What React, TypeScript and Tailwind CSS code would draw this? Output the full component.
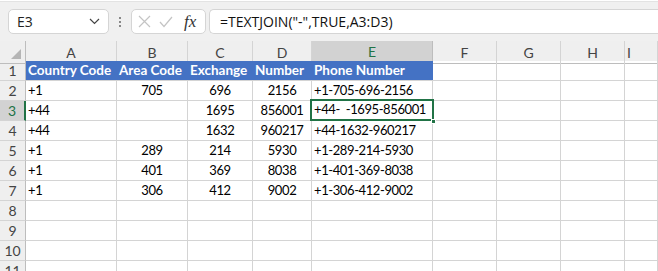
import React from "react";

const cols = ["A", "B", "C", "D", "E", "F", "G", "H", "I"];

const header = ["Country Code", "Area Code", "Exchange", "Number", "Phone Number"];

const data = [
  ["+1", "705", "696", "2156", "+1-705-696-2156"],
  ["+44", "", "1695", "856001", "+44-  -1695-856001"],
  ["+44", "", "1632", "960217", "+44-1632-960217"],
  ["+1", "289", "214", "5930", "+1-289-214-5930"],
  ["+1", "401", "369", "8038", "+1-401-369-8038"],
  ["+1", "306", "412", "9002", "+1-306-412-9002"],
];

const grid = "grid grid-cols-[26px_91px_71px_65px_59px_121px_64px_64px_64px_1fr]";
const cell = "border-b border-r border-[#d4d4d4] flex items-center whitespace-nowrap overflow-hidden";

function RowHead({ n, active }: { n: number; active?: boolean }) {
  return (
    <div
      className={
        "h-5 flex items-center justify-center border-b border-[#d4d4d4] text-[14px] tracking-normal " +
        (active
          ? "bg-[#d2d2d2] text-[#217346] border-r-2 border-r-[#217346]"
          : "bg-[#efefef] text-[#444] border-r border-r-[#bdbdbd]")
      }
    >
      {n}
    </div>
  );
}

export default function App() {
  return (
    <div className="w-[658px] h-[271px] overflow-hidden bg-white font-['Lato','Liberation_Sans',sans-serif] text-[13px] tracking-[-0.4px] text-black">
      {/* formula bar */}
      <div className="h-[2px] bg-white border-b border-[#e3e3e3]" />
      <div className="h-[39px] bg-[#f0f0f0] flex items-start pt-[7px] pl-2 tracking-normal font-['Open_Sans','Liberation_Sans',sans-serif]">
        <div className="w-[101px] h-[25px] bg-white border border-[#d5d5d5] rounded-[5px] flex items-center justify-between pl-2 pr-2 text-[14px] text-[#222]">
          <span>E3</span>
          <svg width="11" height="7" viewBox="0 0 11 7">
            <path d="M1 1l4.5 4.5L10 1" fill="none" stroke="#444" strokeWidth="1.2" />
          </svg>
        </div>
        <div className="w-[22px] h-[25px] flex flex-col items-center justify-center gap-[2px]">
          <span className="w-[2px] h-[2px] bg-[#888]" />
          <span className="w-[2px] h-[2px] bg-[#888]" />
          <span className="w-[2px] h-[2px] bg-[#888]" />
        </div>
        <div className="w-[75px] h-[25px] bg-white border border-[#d5d5d5] rounded-[5px] flex items-center pl-[6px] gap-[8px]">
          <svg width="13" height="13" viewBox="0 0 13 13">
            <path d="M1 1l11 11M12 1L1 12" stroke="#c4c4c4" strokeWidth="1.2" fill="none" />
          </svg>
          <svg width="14" height="12" viewBox="0 0 14 12">
            <path d="M1 6l4 4.5L13 1" stroke="#c4c4c4" strokeWidth="1.2" fill="none" />
          </svg>
          <span className="font-['Liberation_Serif',serif] italic text-[17px] text-[#333] ml-[3px] leading-none">fx</span>
        </div>
        <div className="ml-[3px] flex-1 h-[25px] bg-white border border-[#d5d5d5] border-r-0 rounded-l-[5px] flex items-center pl-[10px] text-[14px] text-[#111]">
          =TEXTJOIN("-",TRUE,A3:D3)
        </div>
      </div>

      {/* column headers */}
      <div className={grid + " h-5 bg-[#efefef] text-[14px] text-[#444] tracking-normal"}>
        <div className="border-b border-[#bdbdbd] border-r border-r-[#bdbdbd] relative">
          <svg className="absolute right-[4px] bottom-[4px]" width="10" height="10" viewBox="0 0 10 10">
            <path d="M10 0V10H0Z" fill="#b5b5b5" />
          </svg>
        </div>
        {cols.map((c) =>
          c === "E" ? (
            <div key={c} className="bg-[#d2d2d2] text-[#217346] border-b-2 border-[#217346] border-r border-r-[#bdbdbd] flex items-center justify-center">
              {c}
            </div>
          ) : (
            <div key={c} className="border-b border-[#bdbdbd] border-r border-r-[#d4d4d4] flex items-center justify-center">
              <span className={c === "I" ? "w-full pl-[2px]" : ""}>{c}</span>
            </div>
          )
        )}
      </div>

      {/* row 1 */}
      <div className={grid + " h-5"}>
        <RowHead n={1} />
        {header.map((h) => (
          <div key={h} className="bg-[#4472c4] border-b border-[#d4d4d4] text-white font-bold text-[13.5px] tracking-normal flex items-center pl-[2px] whitespace-nowrap overflow-hidden">
            {h}
          </div>
        ))}
        {[0, 1, 2, 3].map((i) => (
          <div key={i} className="border-b border-r border-[#d4d4d4]" />
        ))}
      </div>

      {data.map((r, ri) => {
        const rowNum = ri + 2;
        const active = rowNum === 3;
        return (
          <div key={ri} className={grid + " h-5"}>
            <RowHead n={rowNum} active={active} />
            <div className={cell + " pl-[2px]"}>{r[0]}</div>
            <div className={cell + " justify-center"}>{r[1]}</div>
            <div className={cell + " justify-center"}>{r[2]}</div>
            <div className={cell + " justify-center"}>{r[3]}</div>
            {active ? (
              <div className="relative border-b border-r border-[#d4d4d4]">
                <div className="absolute -left-[2px] -top-[2px] right-[-2px] bottom-[-1px] border-2 border-[#217346] flex items-center pl-[2px] whitespace-pre z-10">
                  {r[4]}
                </div>
                <span className="absolute right-[-4px] bottom-[-4px] w-[5px] h-[5px] bg-[#217346] border border-white z-20" />
              </div>
            ) : (
              <div className={cell + " pl-[2px]"}>{r[4]}</div>
            )}
            {[0, 1, 2, 3].map((i) => (
              <div key={i} className="border-b border-r border-[#d4d4d4]" />
            ))}
          </div>
        );
      })}

      {[8, 9, 10, 11].map((n) => (
        <div key={n} className={grid + " h-5"}>
          <RowHead n={n} />
          {[0, 1, 2, 3, 4, 5, 6, 7, 8].map((i) => (
            <div key={i} className="border-b border-r border-[#d4d4d4]" />
          ))}
        </div>
      ))}
    </div>
  );
}
